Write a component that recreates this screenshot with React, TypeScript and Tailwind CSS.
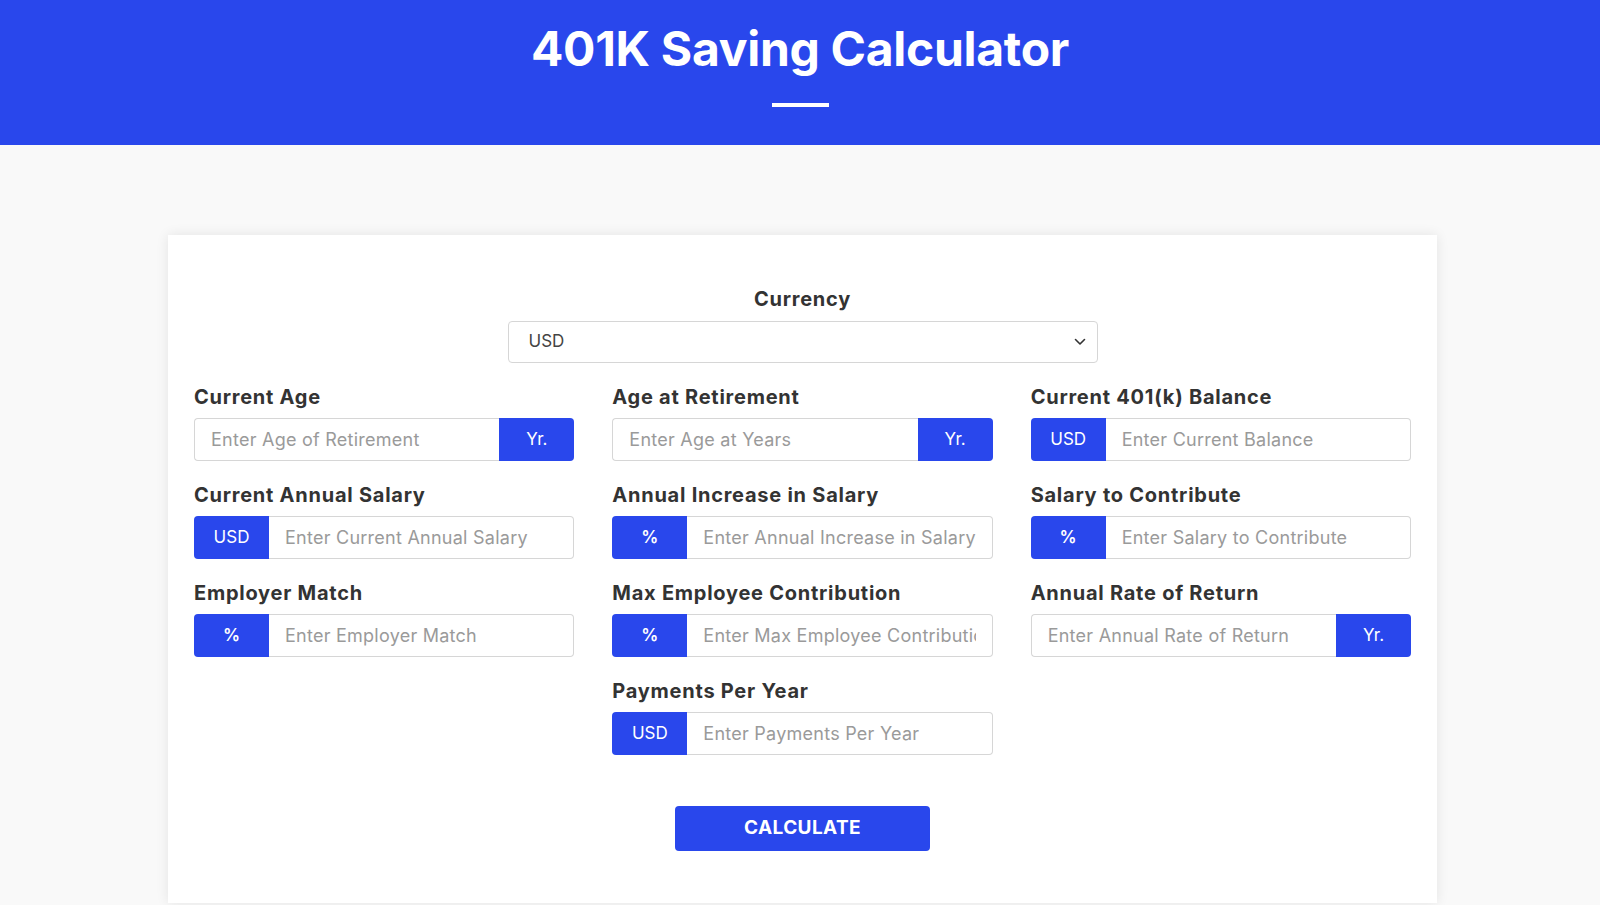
import React, { useState } from 'react';

type Field = {
  label: string;
  placeholder: string;
  addon: string;
  side: 'left' | 'right';
  bold?: boolean;
  col?: string;
};

const fields: Field[] = [
  { label: 'Current Age', placeholder: 'Enter Age of Retirement', addon: 'Yr.', side: 'right' },
  { label: 'Age at Retirement', placeholder: 'Enter Age at Years', addon: 'Yr.', side: 'right' },
  { label: 'Current 401(k) Balance', placeholder: 'Enter Current Balance', addon: 'USD', side: 'left' },
  { label: 'Current Annual Salary', placeholder: 'Enter Current Annual Salary', addon: 'USD', side: 'left' },
  { label: 'Annual Increase in Salary', placeholder: 'Enter Annual Increase in Salary', addon: '%', side: 'left', bold: true },
  { label: 'Salary to Contribute', placeholder: 'Enter Salary to Contribute', addon: '%', side: 'left', bold: true },
  { label: 'Employer Match', placeholder: 'Enter Employer Match', addon: '%', side: 'left', bold: true },
  { label: 'Max Employee Contribution', placeholder: 'Enter Max Employee Contribution', addon: '%', side: 'left', bold: true },
  { label: 'Annual Rate of Return', placeholder: 'Enter Annual Rate of Return', addon: 'Yr.', side: 'right' },
  { label: 'Payments Per Year', placeholder: 'Enter Payments Per Year', addon: 'USD', side: 'left', col: 'col-start-2' },
];

// one label + input group with a blue addon box
const InputGroup: React.FC<{ field: Field }> = ({ field }) => {
  const addon = (
    <span
      className={`flex w-[75px] shrink-0 items-center justify-center bg-[#2947ec] text-[17px] text-white ${
        field.bold ? 'font-semibold' : 'font-normal'
      } ${field.side === 'left' ? 'rounded-l-[4px]' : 'rounded-r-[4px]'}`}
    >
      {field.addon}
    </span>
  );

  return (
    <div className={field.col}>
      <label className="mb-[6px] block text-[20px] font-bold leading-[30px] tracking-[0.75px] text-[#333333]">
        {field.label}
      </label>
      <div className="flex h-[43px]">
        {field.side === 'left' && addon}
        <input
          type="text"
          placeholder={field.placeholder}
          className={`min-w-0 flex-1 border border-[#d6d6d6] bg-white px-[16px] text-[18px] tracking-[0.25px] text-[#444] outline-none placeholder:text-[#9a9a9a] ${
            field.side === 'left' ? 'rounded-r-[4px] border-l-0' : 'rounded-l-[4px] border-r-0'
          }`}
        />
        {field.side === 'right' && addon}
      </div>
    </div>
  );
};

export default function App() {
  const [currency, setCurrency] = useState('USD');

  return (
    <div className="min-h-screen bg-[#f9f9f9] font-['Inter',sans-serif]">
      {/* Header */}
      <header className="flex h-[145px] flex-col items-center bg-[#2947ec] pt-[19px]">
        <h1 className="text-[48px] font-bold leading-[60px] tracking-[-0.3px] text-white">401K Saving Calculator</h1>
        <span className="mt-[24px] block h-[4px] w-[57px] bg-white" />
      </header>

      <main className="pt-[90px]">
        <div className="ml-[168px] w-[1269px] bg-white px-[26px] pb-[52px] pt-[49px] shadow-[0_0_12px_rgba(0,0,0,0.09)]">
          {/* Currency */}
          <div className="flex flex-col items-center">
            <label className="text-[20px] font-bold leading-[30px] tracking-[0.75px] text-[#333333]">Currency</label>
            <div className="relative mt-[7px] w-[590px]">
              <select
                value={currency}
                onChange={(e) => setCurrency(e.target.value)}
                className="h-[42px] w-full appearance-none rounded-[4px] border border-[#d6d6d6] bg-white pl-[20px] text-[17px] text-[#444] outline-none"
              >
                <option value="USD">USD</option>
                <option value="EUR">EUR</option>
                <option value="GBP">GBP</option>
              </select>
              <svg
                className="pointer-events-none absolute right-[12px] top-1/2 -translate-y-1/2"
                width="12"
                height="8"
                viewBox="0 0 12 8"
                fill="none"
              >
                <path d="M1.5 1.5L6 6L10.5 1.5" stroke="#333" strokeWidth="1.6" strokeLinecap="round" strokeLinejoin="round" />
              </svg>
            </div>
          </div>

          {/* Fields */}
          <div className="mt-[19px] grid grid-cols-3 gap-x-[38px] gap-y-[19px]">
            {fields.map((f) => (
              <InputGroup key={f.label} field={f} />
            ))}
          </div>

          <div className="mt-[51px] flex justify-center">
            <button
              type="button"
              className="h-[45px] w-[255px] rounded-[4px] bg-[#2947ec] text-[19px] font-bold uppercase tracking-[0.4px] text-white"
            >
              Calculate
            </button>
          </div>
        </div>
      </main>
    </div>
  );
}
